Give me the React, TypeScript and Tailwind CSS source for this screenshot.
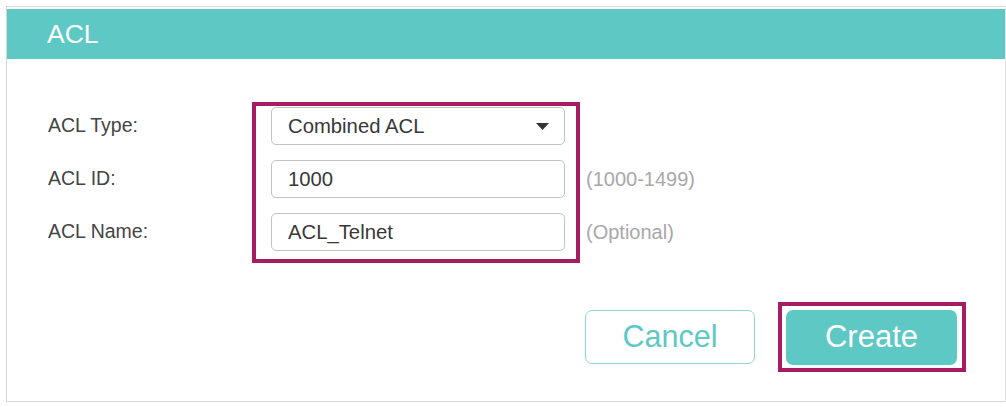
import React from "react";

export default function App() {
  const font = { fontFamily: '"Liberation Sans", Arial, sans-serif' };
  return (
    <div className="w-[1006px] h-[407px] bg-white pl-[6px] pt-[6px] pb-[5px]" style={font}>
      <div className="h-full border border-[#d6d6d6] border-r-[#e6e6e6] pt-[2px] flex flex-col">
        <div className="h-[50px] bg-[#5ec8c4] pl-[40px] flex items-center text-white text-[26.5px] leading-none">
          ACL
        </div>
        <div className="flex mt-[43px] pl-[41px]">
          <div className="w-[204px] flex flex-col pt-[5px] gap-[15px] text-[19.5px] text-[#444]">
            <div className="h-[38px] flex items-center">ACL Type:</div>
            <div className="h-[38px] flex items-center">ACL ID:</div>
            <div className="h-[38px] flex items-center">ACL Name:</div>
          </div>
          <div className="w-[328px] border-[4px] border-[#a51c60] pt-[1px] pl-[15px] pr-[11px] pb-[8px] flex flex-col gap-[15px]">
            <div className="h-[38px] border border-[#c4c4c4] rounded-[5px] flex items-center justify-between pl-[16px] pr-[15px] text-[20.3px] text-[#383838]">
              <span>Combined ACL</span>
              <svg width="13" height="7" viewBox="0 0 13 7">
                <polygon points="0,0 13,0 6.5,7" fill="#333" />
              </svg>
            </div>
            <div className="h-[38px] border border-[#c4c4c4] rounded-[5px] flex items-center pl-[16px] text-[20.3px] text-[#383838]">
              1000
            </div>
            <div className="h-[38px] border border-[#c4c4c4] rounded-[5px] flex items-center pl-[16px] text-[20.3px] text-[#383838]">
              ACL_Telnet
            </div>
          </div>
          <div className="flex flex-col pt-[5px] gap-[15px] pl-[6px] text-[20px] text-[#a8a8a8]">
            <div className="h-[38px]"></div>
            <div className="h-[38px] flex items-center">(1000-1499)</div>
            <div className="h-[38px] flex items-center">(Optional)</div>
          </div>
        </div>
        <div className="flex justify-end items-center mt-[39px] pr-[39px] gap-[23px]">
          <button className="w-[170px] h-[54px] border-[1.5px] border-[#8fd6d2] rounded-[7px] text-[30.5px] text-[#5ec8c4] bg-white flex items-center justify-center">
            Cancel
          </button>
          <div className="border-[4px] border-[#a51c60] p-[4px] pr-[5px] pb-[3px]">
            <button className="w-[171px] h-[55px] bg-[#5ec8c4] rounded-[7px] text-[31px] text-white flex items-center justify-center">
              Create
            </button>
          </div>
        </div>
      </div>
    </div>
  );
}
